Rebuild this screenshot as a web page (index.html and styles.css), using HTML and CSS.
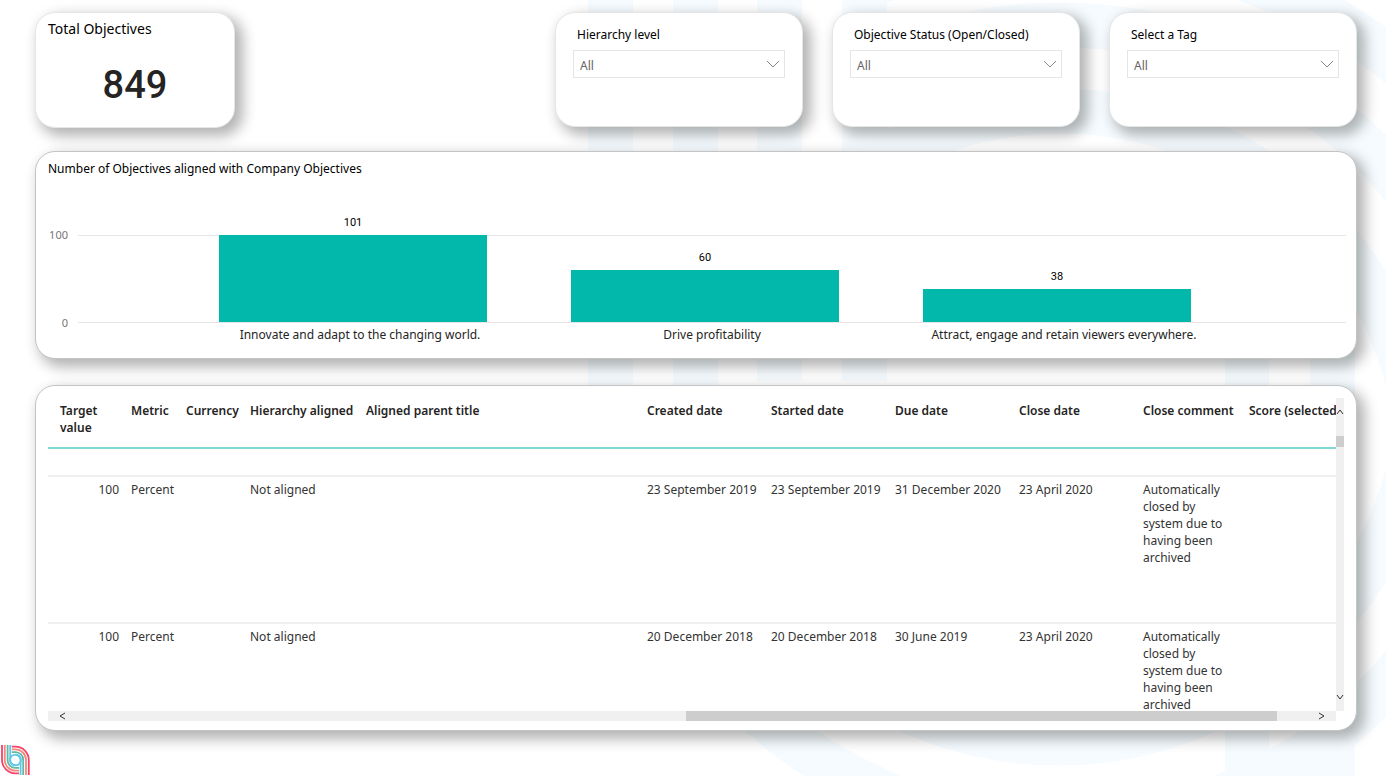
FILE: index.html
```html
<!DOCTYPE html>
<html lang="en">
<head>
  <meta charset="UTF-8" />
  <title>Objectives report</title>
  <meta name="viewport" content="width=device-width, initial-scale=1.0" />
  <link rel="stylesheet" href="styles.css">
</head>
<body>

<svg class="backdrop" viewBox="0 0 1386 776" preserveAspectRatio="xMidYMin slice" aria-hidden="true">
  <defs>
    <clipPath id="upper"><rect x="864" y="0" width="522" height="470"/></clipPath>
    <clipPath id="lower"><rect x="588" y="381" width="798" height="395"/></clipPath>
  </defs>
  <path d="M588 0h45v381h-45zM673 0h45v381h-45zM757 0h45v381h-45zM842 0h45v381h-45z"/>
  <path d="M1225 350h44v426h-44zM1310 350h45v426h-45z"/>
  <g class="rings" clip-path="url(#upper)">
    <circle cx="1060" cy="470" r="359"/>
    <circle cx="1060" cy="470" r="445"/>
    <circle cx="1066" cy="480" r="532"/>
  </g>
  <g class="rings" clip-path="url(#lower)">
    <circle cx="1058" cy="381" r="362"/>
    <circle cx="1058" cy="381" r="447"/>
  </g>
</svg>

<main class="report">
  <div class="top-row">
    <section class="card total">
      <h2>Total Objectives</h2>
      <p class="total-value">849</p>
    </section>

    <div class="filters">
      <div class="card filter">
        <label for="level">Hierarchy level</label>
        <div class="select-wrapper">
          <select id="level"><option>All</option></select>
          <svg class="chevron" viewBox="0 0 14 8"><path d="M1 1l6 6 6-6"/></svg>
        </div>
      </div>
      <div class="card filter">
        <label for="status">Objective Status (Open/Closed)</label>
        <div class="select-wrapper">
          <select id="status"><option>All</option></select>
          <svg class="chevron" viewBox="0 0 14 8"><path d="M1 1l6 6 6-6"/></svg>
        </div>
      </div>
      <div class="card filter">
        <label for="tag">Select a Tag</label>
        <div class="select-wrapper">
          <select id="tag"><option>All</option></select>
          <svg class="chevron" viewBox="0 0 14 8"><path d="M1 1l6 6 6-6"/></svg>
        </div>
      </div>
    </div>
  </div>

  <section class="card panel chart">
    <h2>Number of Objectives aligned with Company Objectives</h2>
    <div class="chart-body">
      <div class="axis"><span>100</span><span>0</span></div>
      <div class="plot">
        <div class="column"><span>101</span><div class="bar" style="height: 101%"></div></div>
        <div class="column"><span>60</span><div class="bar" style="height: 60%"></div></div>
        <div class="column"><span>38</span><div class="bar" style="height: 38%"></div></div>
      </div>
      <div class="categories">
        <span>Innovate and adapt to the changing world.</span>
        <span>Drive profitability</span>
        <span>Attract, engage and retain viewers everywhere.</span>
      </div>
    </div>
  </section>

  <section class="card panel grid">
    <div class="viewport">
      <table>
        <colgroup>
          <col class="c-target"><col class="c-metric"><col class="c-currency"><col class="c-aligned"><col class="c-parent">
          <col class="c-date"><col class="c-date"><col class="c-date"><col class="c-date"><col class="c-comment"><col class="c-score">
        </colgroup>
        <thead>
          <tr>
            <th>Target value</th>
            <th>Metric</th>
            <th>Currency</th>
            <th>Hierarchy aligned</th>
            <th>Aligned parent title</th>
            <th>Created date</th>
            <th>Started date</th>
            <th>Due date</th>
            <th>Close date</th>
            <th>Close comment</th>
            <th>Score (selected)</th>
          </tr>
        </thead>
        <tbody>
          <tr class="tail"><td colspan="11"></td></tr>
          <tr>
            <td>100</td>
            <td>Percent</td>
            <td></td>
            <td>Not aligned</td>
            <td></td>
            <td>23 September 2019</td>
            <td>23 September 2019</td>
            <td>31 December 2020</td>
            <td>23 April 2020</td>
            <td>Automatically closed by system due to having been archived</td>
            <td></td>
          </tr>
          <tr>
            <td>100</td>
            <td>Percent</td>
            <td></td>
            <td>Not aligned</td>
            <td></td>
            <td>20 December 2018</td>
            <td>20 December 2018</td>
            <td>30 June 2019</td>
            <td>23 April 2020</td>
            <td>Automatically closed by system due to having been archived</td>
            <td></td>
          </tr>
        </tbody>
      </table>
    </div>
    <div class="scroll-y">
      <button type="button" aria-label="Scroll up"><svg viewBox="0 0 8 8"><path d="M1 6l3-4 3 4"/></svg></button>
      <div class="track"><div class="thumb"></div></div>
      <button type="button" aria-label="Scroll down"><svg viewBox="0 0 8 8"><path d="M1 2l3 4 3-4"/></svg></button>
    </div>
    <div class="scroll-x">
      <button type="button" aria-label="Scroll left"><svg viewBox="0 0 8 8"><path d="M7 1L2 4l5 3"/></svg></button>
      <div class="track"><div class="thumb"></div></div>
      <button type="button" aria-label="Scroll right"><svg viewBox="0 0 8 8"><path d="M1 1l5 3-5 3"/></svg></button>
    </div>
  </section>
</main>

<footer>
  <svg class="logo" viewBox="0 0 30 30" role="img" aria-label="Logo">
    <defs>
      <g id="strands">
        <path class="red" d="M2 0v15a13.400 13.400 0 0 0 13.400 13.400H19"/>
        <path class="coral" d="M4.800 0v15a10.600 10.600 0 0 0 10.600 10.600H19"/>
        <path class="teal" d="M7.600 0v15a7.800 7.800 0 0 0 7.800 7.800H19"/>
        <path class="blue" d="M10.200 0v15a5.200 5.200 0 0 0 5.200 5.200"/>
      </g>
    </defs>
    <use href="#strands"/>
    <use href="#strands" transform="rotate(180 15.400 15)"/>
    <circle class="blue" cx="15.400" cy="15" r="5.400"/>
  </svg>
</footer>

</body>
</html>
```
FILE: styles.css
```css
* { box-sizing: border-box; }
body {
  margin: 0;
  min-height: 100vh;
  display: flex;
  flex-direction: column;
  background: #fff;
  color: #252423;
  font-family: "Noto Sans", "Open Sans", sans-serif;
  font-size: 12px;
  line-height: 17px;
  overflow: hidden;
}
h2, p { margin: 0; }
.backdrop {
  position: absolute;
  inset: 0;
  width: 100%;
  height: 100%;
  z-index: -1;
  fill: #f5fbfe;
}
.rings {
  fill: none;
  stroke: #f5fbfe;
  stroke-width: 45;
}
.report {
  flex: 1;
  display: flex;
  flex-direction: column;
  padding: 12px 29px 0 35px;
}
.card {
  background: #fff;
  border: 1px solid #e6e6e6;
  border-radius: 20px;
  box-shadow: 6px 6px 14px 2px rgba(0,0,0,0.3);
}
.card h2 {
  color: #000;
  font-size: 12px;
  font-weight: 400;
}
.panel { border-color: #c4c4c4; }

/* top row */
.top-row {
  display: flex;
  justify-content: space-between;
  align-items: flex-start;
}
.total {
  width: 200px;
  height: 116px;
  padding: 7px 12px;
}
.total h2 { font-size: 14px; }
.total-value {
  margin-top: 28px;
  font-family: Roboto, sans-serif;
  font-size: 38px;
  font-weight: 500;
  line-height: 40px;
  text-align: center;
}
.filters {
  display: flex;
  gap: 29px;
}
.filter {
  width: 248px;
  height: 115px;
  padding: 13px 17px;
}
.filter label {
  display: block;
  padding-left: 4px;
  color: #000;
}
.select-wrapper {
  position: relative;
  margin-top: 7px;
}
.select-wrapper select {
  display: block;
  width: 100%;
  height: 28px;
  padding: 2px 6px 0;
  border: 1px solid #e6e6e6;
  border-radius: 0;
  background: #fff;
  color: #666;
  font: inherit;
  appearance: none;
}
.chevron {
  position: absolute;
  right: 5px;
  top: 10px;
  width: 14px;
  height: 8px;
  fill: none;
  stroke: #888;
  pointer-events: none;
}

/* bar chart */
.chart {
  margin-top: 23px;
  padding: 8px 10px 15px 12px;
}
.chart-body {
  display: grid;
  grid-template-columns: 20px 1fr;
  column-gap: 10px;
  margin-top: 58px;
}
.axis {
  display: flex;
  flex-direction: column;
  justify-content: space-between;
  margin: -9px 0 -8px;
  color: #777;
  font-size: 11px;
  text-align: right;
}
.plot {
  display: flex;
  height: 88px;
  padding: 0 113px 0 99px;
  border-top: 1px solid #e6e6e6;
  border-bottom: 1px solid #e6e6e6;
}
.column {
  flex: 1;
  display: flex;
  flex-direction: column;
  justify-content: flex-end;
  align-items: center;
}
.column span {
  margin-bottom: 4px;
  color: #000;
  font-family: Roboto, sans-serif;
  font-size: 11px;
}
.bar {
  flex-shrink: 0;
  width: 76%;
  background: #01b8aa;
}
.categories {
  grid-column: 2;
  display: flex;
  margin-top: 3px;
  padding: 0 106px;
}
.categories span {
  flex: 1;
  text-align: center;
  white-space: nowrap;
}

/* table */
.grid {
  display: grid;
  grid-template-columns: 1fr 8px;
  margin-top: 26px;
  padding: 12px 12px 9px;
}
.viewport {
  height: 313px;
  overflow: hidden;
}
table {
  width: 1340px;
  table-layout: fixed;
  border-collapse: collapse;
}
.c-target { width: 77px; }
.c-metric { width: 55px; }
.c-currency { width: 64px; }
.c-aligned { width: 116px; }
.c-parent { width: 281px; }
.c-date { width: 124px; }
.c-comment { width: 106px; }
th, td {
  padding: 4px 6px;
  text-align: left;
  vertical-align: top;
}
th {
  height: 50px;
  font-weight: 600;
  white-space: nowrap;
  border-bottom: 2px solid #7fd9d2;
}
th:first-child {
  padding-left: 12px;
  white-space: normal;
}
td {
  height: 147px;
  color: #333;
  border-bottom: 2px solid #f0f0f0;
}
td:first-child { text-align: right; }
.tail td { height: 28px; }

.track { flex: 1; }
.thumb { background: #cdcdcd; }
.scroll-y, .scroll-x {
  display: flex;
  background: #f0f0f0;
}
.scroll-y { flex-direction: column; }
.scroll-y .track { padding-top: 10px; }
.scroll-y .thumb { height: 11px; }
.scroll-x { height: 10px; }
.scroll-x .thumb {
  width: 48%;
  height: 10px;
  margin-left: 49.5%;
}
.scroll-y button, .scroll-x button {
  display: flex;
  align-items: center;
  justify-content: center;
  padding: 0;
  border: 0;
  background: none;
}
.scroll-y button { height: 28px; }
.scroll-x button { width: 28px; }
.scroll-y svg, .scroll-x svg {
  width: 8px;
  height: 8px;
  fill: none;
  stroke: #333;
}

footer { padding: 0 0 1px; }
.logo {
  display: block;
  width: 30px;
  height: 30px;
  fill: none;
  stroke-width: 1.8;
}
.red { stroke: #f4436c; }
.coral { stroke: #f58a7c; }
.teal { stroke: #5fb8a8; }
.blue { stroke: #5cc8ea; }
```
